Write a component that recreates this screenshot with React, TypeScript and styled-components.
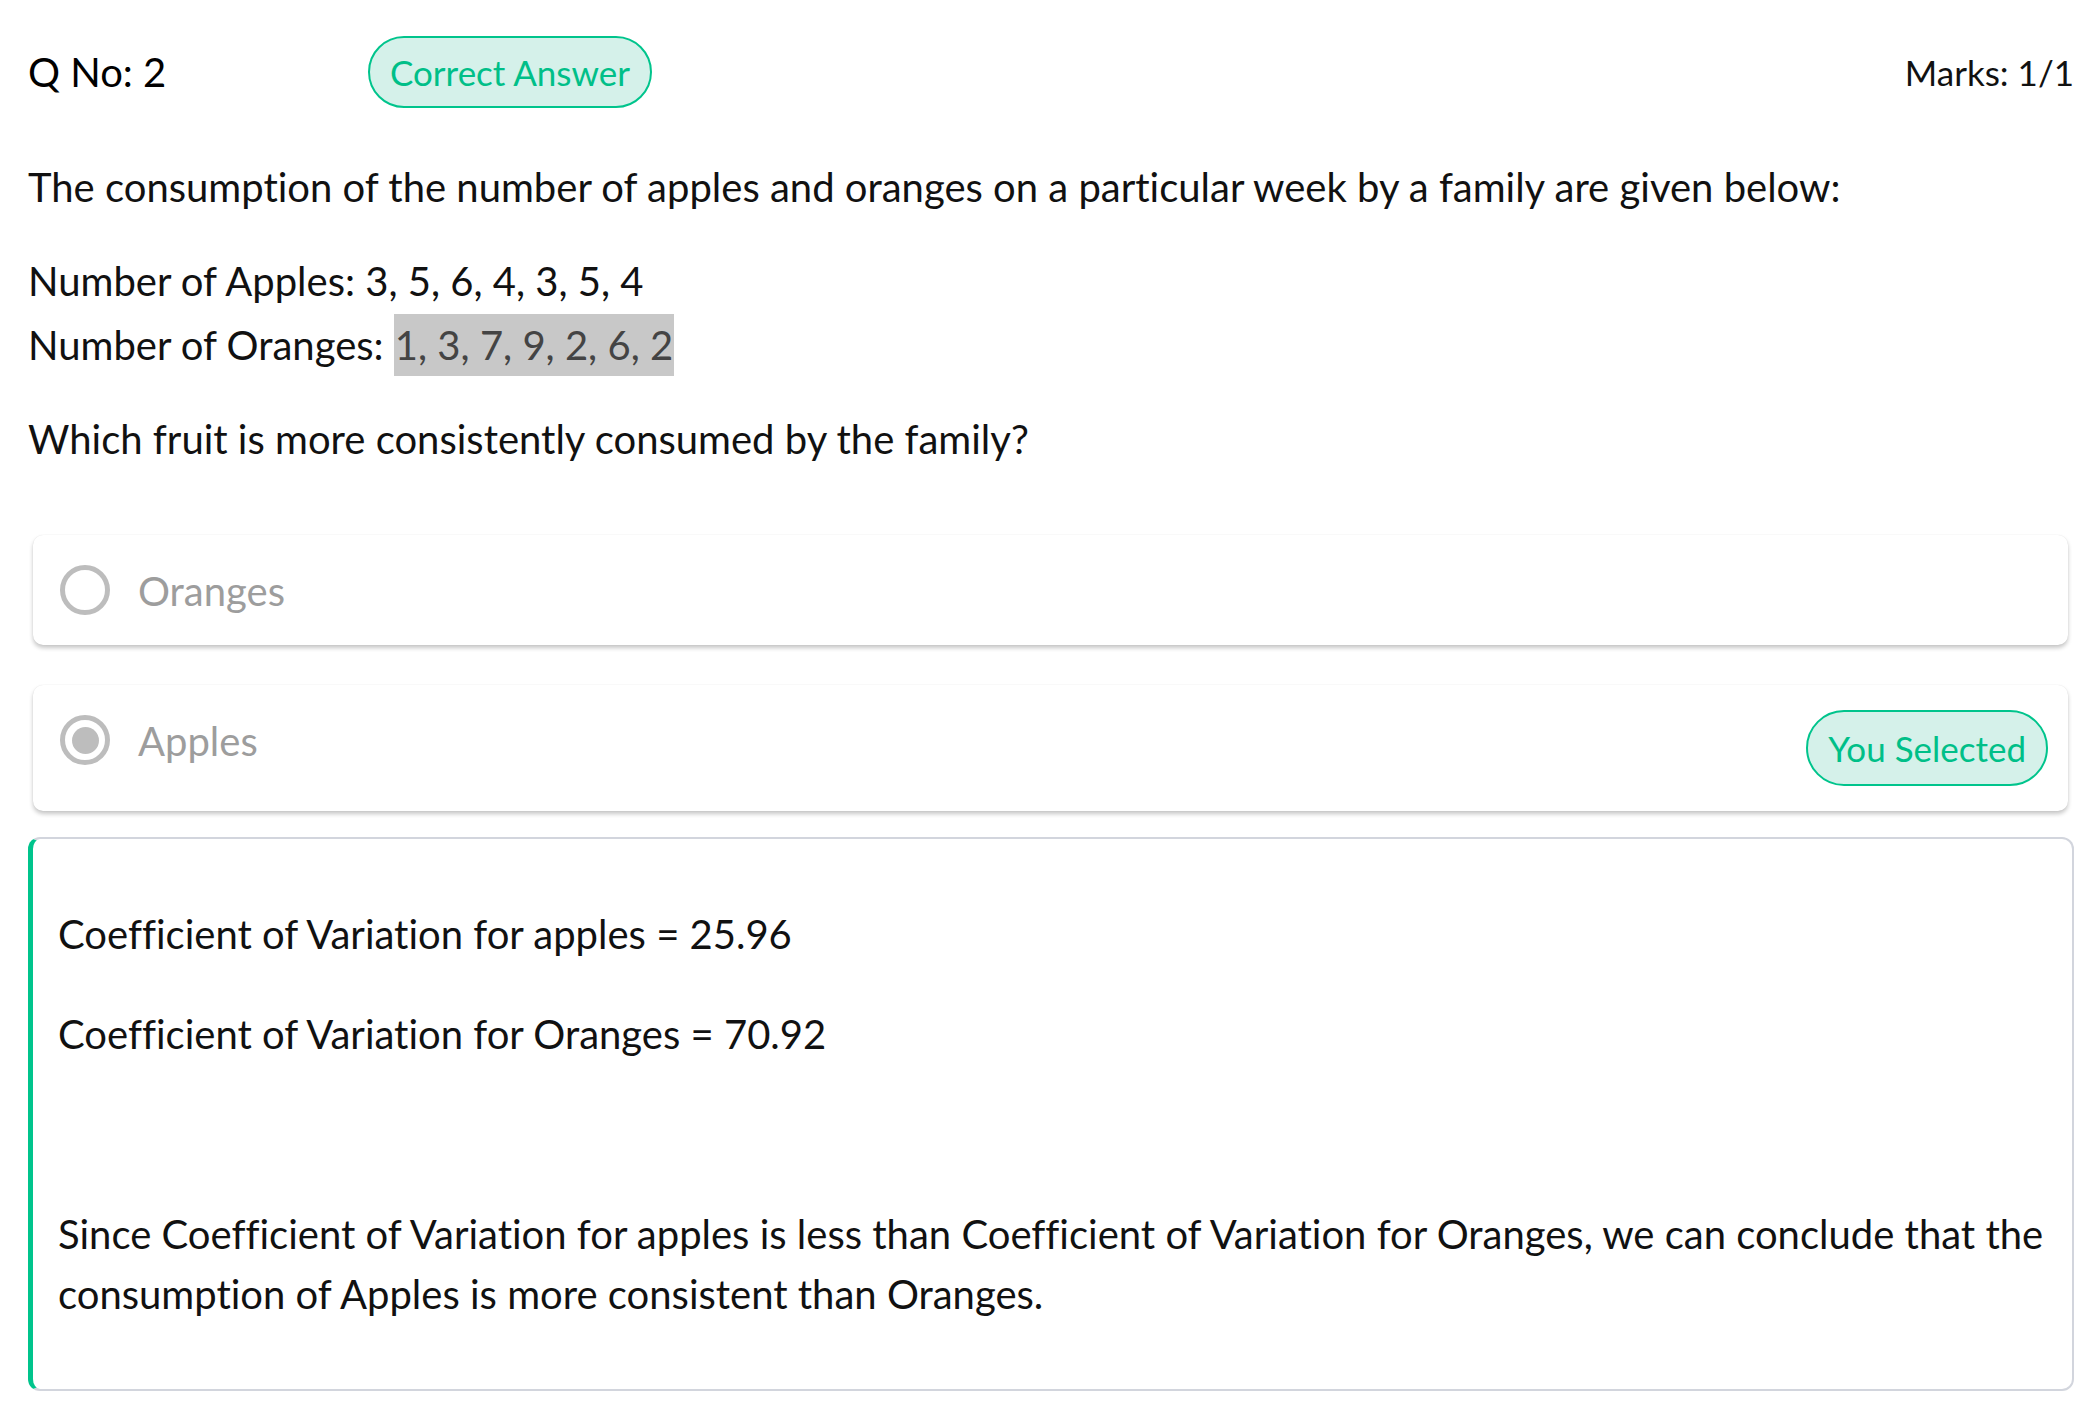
import React from "react";
import styled, { createGlobalStyle } from "styled-components";

const GlobalStyle = createGlobalStyle`
  html, body {
    margin: 0;
    padding: 0;
    background: #ffffff;
  }
  body {
    font-family: Lato, "Open Sans", Arial, sans-serif;
    color: #111111;
    font-variant-ligatures: no-common-ligatures;
    font-feature-settings: "liga" 0;
  }
`;

const Page = styled.div`
  padding: 36px 19px 24px 28px;
  display: flex;
  flex-direction: column;
`;

const Header = styled.div`
  display: flex;
  align-items: center;
  height: 72px;
`;

const QNo = styled.div`
  width: 340px;
  font-size: 40px;
  color: #000;
`;

const Pill = styled.div<{ $h: number }>`
  box-sizing: border-box;
  height: ${(p) => p.$h}px;
  padding: 0 20px;
  display: inline-flex;
  align-items: center;
  border: 2px solid #00c48c;
  background: #d5f1ea;
  color: #00bf88;
  border-radius: 40px;
  font-size: 35px;
  flex: none;
`;

const Marks = styled.div`
  margin-left: auto;
  font-size: 35px;
  color: #111;
`;

const Para = styled.p<{ $mt?: number }>`
  margin: ${(p) => p.$mt ?? 30}px 0 0;
  font-size: 40px;
  line-height: 64px;
  color: #111;
`;

const Highlight = styled.span`
  background: #c8c8c8;
  color: #444;
  padding: 7px 1px;
`;

const Options = styled.div`
  margin: 64px 6px 0 5px;
  display: flex;
  flex-direction: column;
  gap: 40px;
`;

const OptionCard = styled.div`
  display: flex;
  align-items: flex-start;
  padding: 23px 20px 23px 27px;
  background: #fff;
  border-radius: 10px;
  box-shadow: 0 0 1px rgba(0, 0, 0, 0.12), 0 3px 4px rgba(0, 0, 0, 0.22);
`;

const Radio = styled.span<{ $checked?: boolean }>`
  box-sizing: border-box;
  width: 50px;
  height: 50px;
  margin-top: 7px;
  border-radius: 50%;
  border: 5px solid #bdbdbd;
  display: flex;
  align-items: center;
  justify-content: center;
  flex: none;
  &::after {
    content: "";
    width: 27px;
    height: 27px;
    border-radius: 50%;
    background: #bdbdbd;
    display: ${(p) => (p.$checked ? "block" : "none")};
  }
`;

const OptionLabel = styled.span`
  margin-left: 28px;
  font-size: 40px;
  line-height: 61px;
  padding-top: 3px;
  color: #9d9d9d;
  flex: 1;
`;

const SelectedPill = styled(Pill)`
  margin: 2px 0;
`;

const Explanation = styled.div`
  margin-top: 26px;
  border: 2px solid #d2d5dd;
  border-left: 5px solid #00c48c;
  border-radius: 12px;
  padding: 25px 25px;
`;

const ExpPara = styled.p`
  margin: 40px 0;
  font-size: 40px;
  line-height: 60px;
  color: #111;
  min-height: 60px;
`;

export default function App() {
  return (
    <>
      <GlobalStyle />
      <Page>
        <Header>
          <QNo>Q No: 2</QNo>
          <Pill $h={72}>Correct Answer</Pill>
          <Marks>Marks: 1/1</Marks>
        </Header>
        <Para $mt={47}>
          The consumption of the number of apples and oranges on a particular week by a family are given below:
        </Para>
        <Para>
          Number of Apples: 3, 5, 6, 4, 3, 5, 4
          <br />
          Number of Oranges: <Highlight>1, 3, 7, 9, 2, 6, 2</Highlight>
        </Para>
        <Para $mt={30}>Which fruit is more consistently consumed by the family?</Para>
        <Options>
          <OptionCard>
            <Radio />
            <OptionLabel>Oranges</OptionLabel>
          </OptionCard>
          <OptionCard>
            <Radio $checked />
            <OptionLabel>Apples</OptionLabel>
            <SelectedPill $h={76}>You Selected</SelectedPill>
          </OptionCard>
        </Options>
        <Explanation>
          <ExpPara>Coefficient of Variation for apples = 25.96</ExpPara>
          <ExpPara>Coefficient of Variation for Oranges = 70.92</ExpPara>
          <ExpPara>{"\u00a0"}</ExpPara>
          <ExpPara>
            Since Coefficient of Variation for apples is less than Coefficient of Variation for Oranges, we can conclude that the consumption of Apples is more consistent than Oranges.
          </ExpPara>
        </Explanation>
      </Page>
    </>
  );
}
